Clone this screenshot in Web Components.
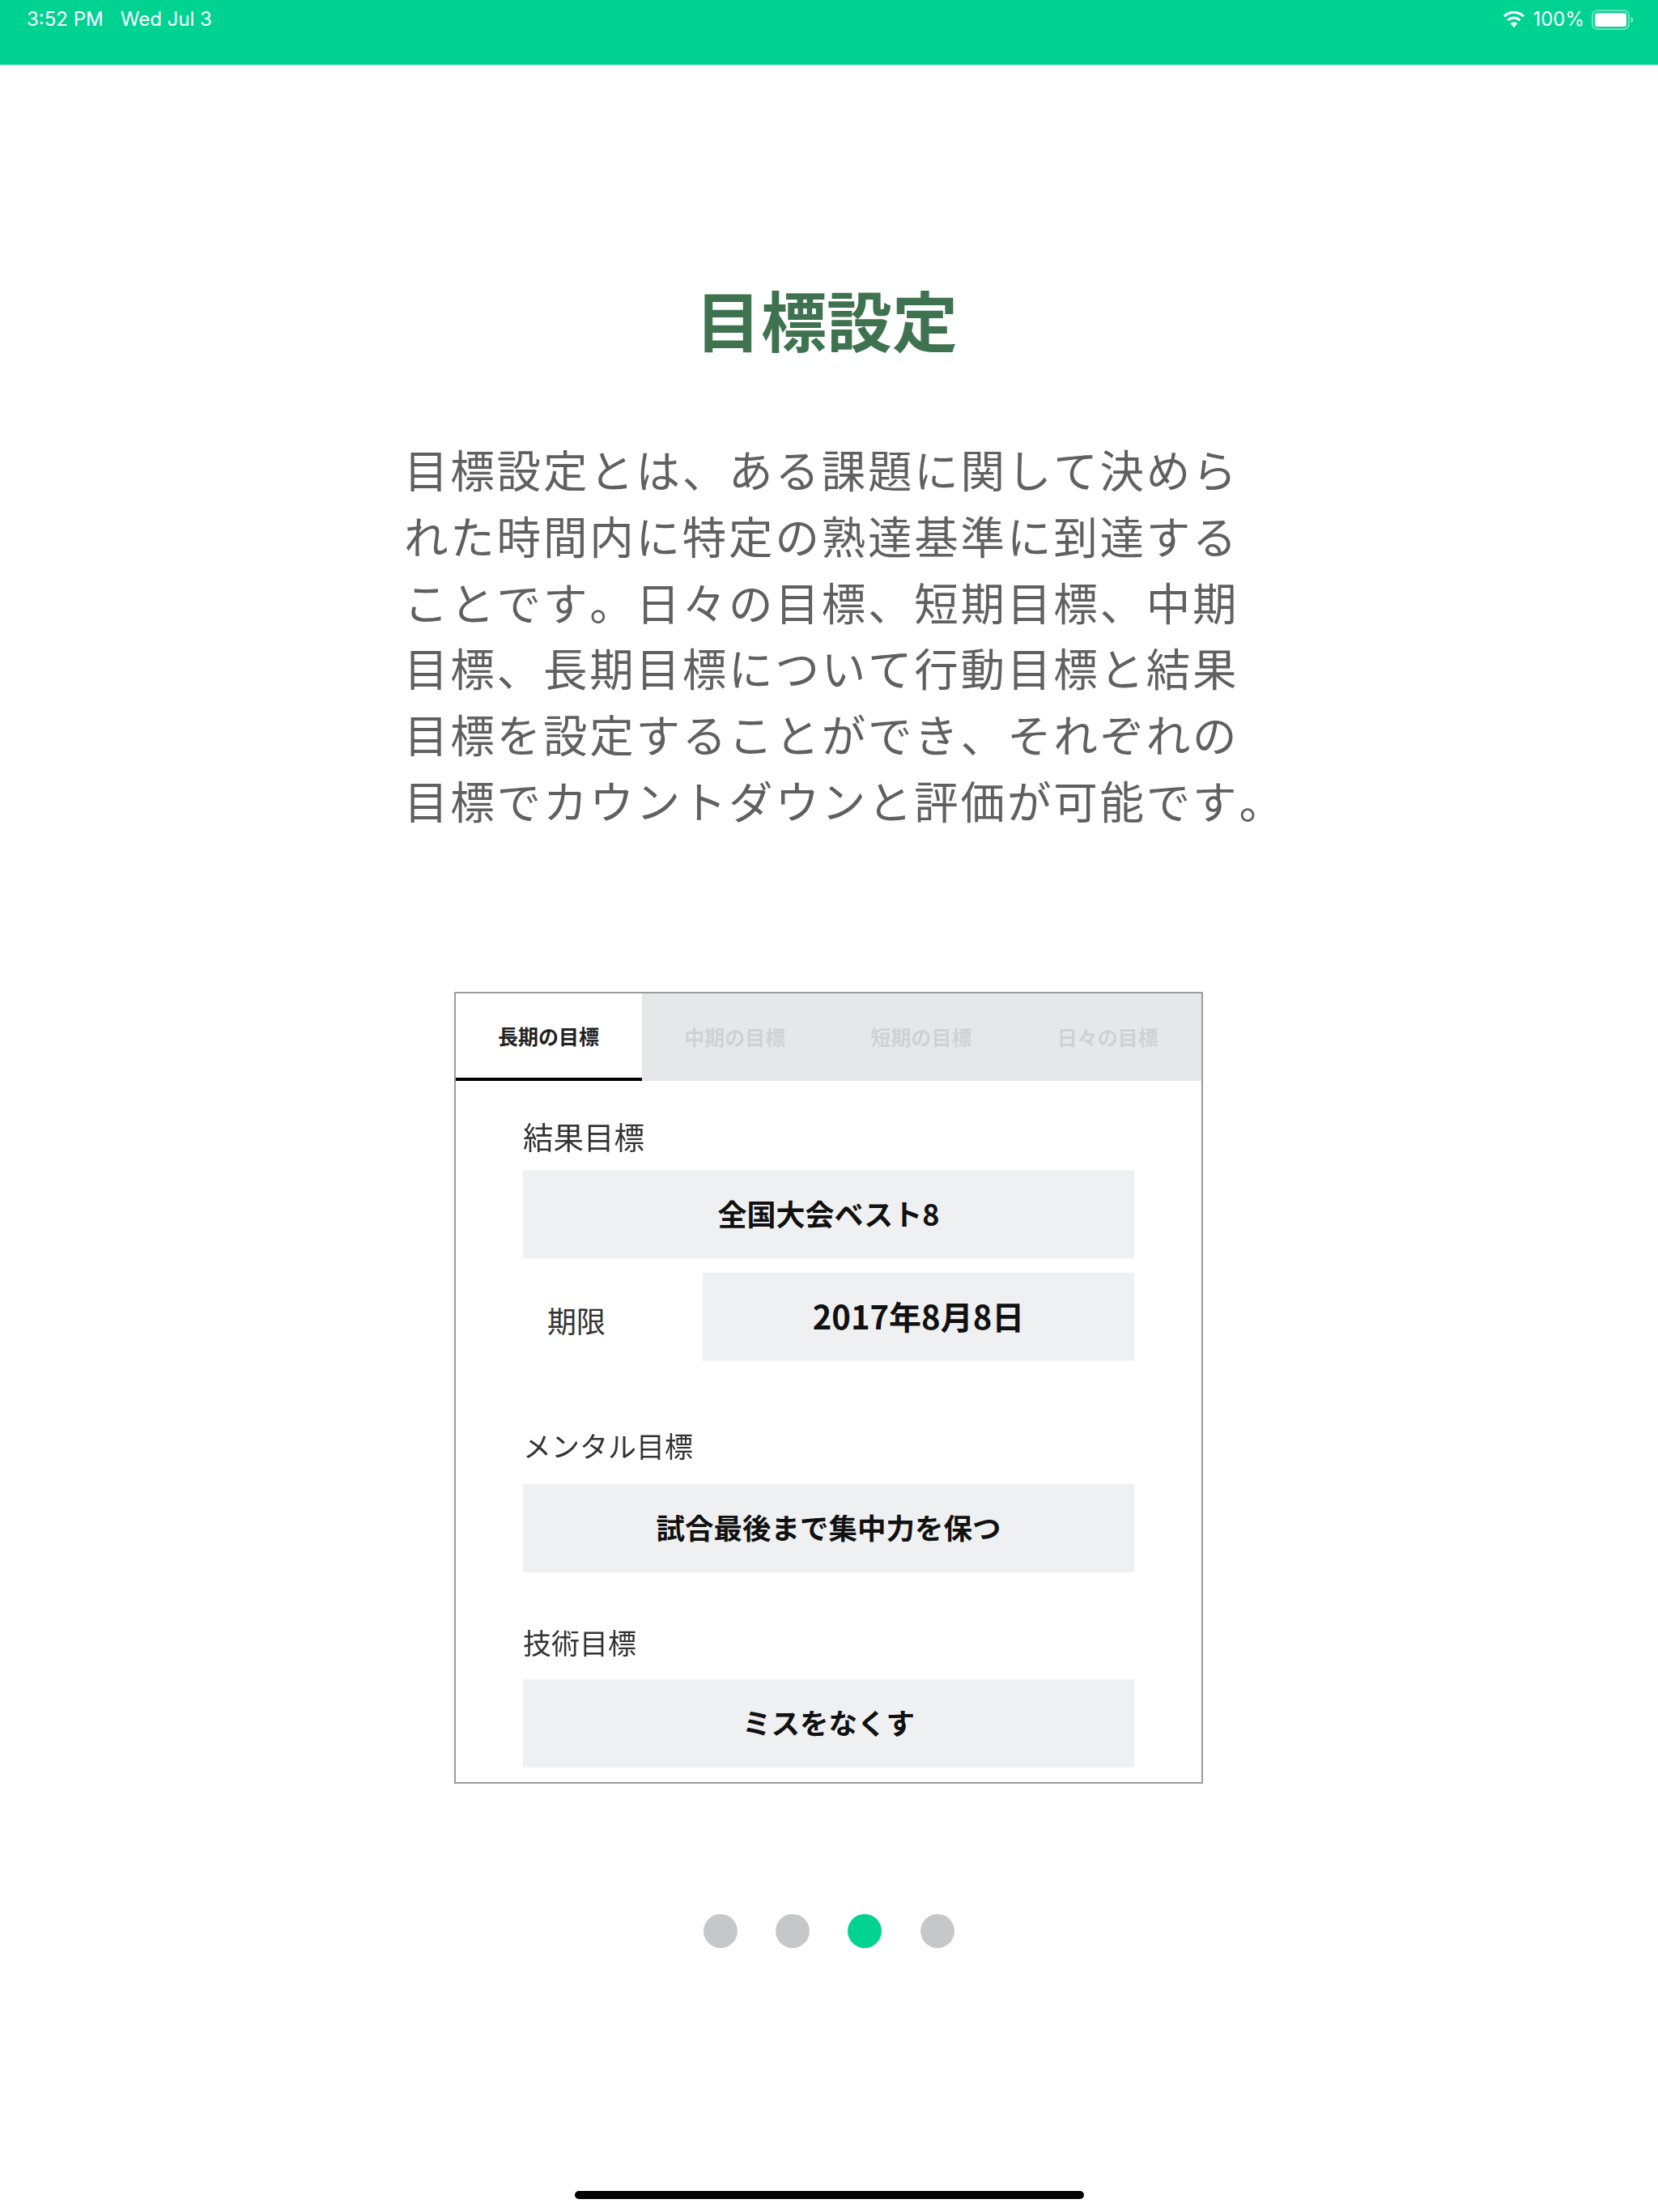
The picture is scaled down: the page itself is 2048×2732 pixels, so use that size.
<!DOCTYPE html>
<html lang="ja"><head><meta charset="utf-8"><title>目標設定</title>
<style>
html,body{margin:0;padding:0;background:#fff}
body{width:2048px;height:2732px;overflow:hidden;font-family:"Noto Sans CJK JP","Noto Sans",sans-serif}
</style></head><body>
<onboard-page>
  <status-bar slot="status"></status-bar>
  <page-title slot="title">目標設定</page-title>
  <intro-text slot="intro">目標設定とは、ある課題に関して決めら<br>れた時間内に特定の熟達基準に到達する<br>ことです。日々の目標、短期目標、中期<br>目標、長期目標について行動目標と結果<br>目標を設定することができ、それぞれの<br>目標でカウントダウンと評価が可能です。</intro-text>
  <goal-card slot="card">
    <goal-tabs slot="tabs"></goal-tabs>
    <goal-label style="--top:48px;--size:37.500px">結果目標</goal-label>
    <goal-field style="--top:22px;--size:36px">全国大会ベスト8</goal-field>
    <goal-deadline></goal-deadline>
    <goal-label style="--top:84px;--size:35px">メンタル目標</goal-label>
    <goal-field style="--top:28px;--size:35.500px">試合最後まで集中力を保つ</goal-field>
    <goal-label style="--top:66px;--size:35px">技術目標</goal-label>
    <goal-field style="--top:26px;--size:35.500px">ミスをなくす</goal-field>
  </goal-card>
  <pager-dots slot="dots" active="2"></pager-dots>
  <home-bar slot="home"></home-bar>
</onboard-page>
<script>
const JP='"Noto Sans CJK JP","Noto Sans",sans-serif';
function el(name,css,html){
  customElements.define(name,class extends HTMLElement{
    constructor(){super();this.attachShadow({mode:'open'}).innerHTML='<style>'+css+'</style>'+html;}
  });
}
el('onboard-page',`:host{display:flex;flex-direction:column;width:2048px;height:2732px;align-items:center}
 ::slotted([slot=status]){align-self:stretch}`,
 `<slot name="status"></slot><slot name="title"></slot><slot name="intro"></slot><slot name="card"></slot><slot name="dots"></slot><slot name="home"></slot>`);
el('status-bar',`:host{display:flex;height:80px;box-sizing:border-box;background:#00d291;color:#fff;padding:10px 30px 0 33px;font:24px/28px Inter,"Liberation Sans",sans-serif;align-items:flex-start}
 .date{margin-left:21px}.sp{flex:1}.pct{margin:0 9px 0 9px}
 svg{display:block}`,
 `<span>3:52 PM</span><span class="date">Wed Jul 3</span><span class="sp"></span>
 <svg width="28" height="20" viewBox="0 0 28 20" style="margin-top:4px;overflow:visible"><path d="M14 20 9.600 15A6.600 6.600 0 0 1 18.400 15Z" fill="#fff"/><path d="M6.500 11A10.800 10.800 0 0 1 21.500 11" fill="none" stroke="#fff" stroke-width="3"/><path d="M2 6.200A17 17 0 0 1 26 6.200" fill="none" stroke="#fff" stroke-width="3"/></svg>
 <span class="pct">100%</span>
 <svg width="52" height="26" viewBox="0 0 52 26" style="margin-top:2px"><rect x="1" y="1" width="45" height="23" rx="6" fill="none" stroke="#fff" stroke-opacity=".4" stroke-width="2"/><rect x="4" y="4" width="39" height="17" rx="3.5" fill="#fff"/><path d="M48.500 9c1.800.5 2.800 2 2.800 3.500S50.300 15.500 48.500 16Z" fill="#fff" fill-opacity=".5"/></svg>`);
el('page-title',`:host{display:block;margin:268px 6px 0 0;height:90px;font:700 81px/90px ${JP};color:#3f7350;text-align:center;white-space:nowrap;filter:blur(.6px)}`,`<slot></slot>`);
el('intro-text',`:host{display:block;align-self:flex-start;margin:100px 0 0 499px;font:400 54.500px/81.800px ${JP};font-kerning:none;letter-spacing:2.800px;color:#606060;white-space:nowrap;filter:blur(.6px)}`,`<slot></slot>`);
el('goal-card',`:host{display:flex;flex-direction:column;box-sizing:border-box;width:925px;height:978px;margin-top:196px;border:2px solid #9c9c9c;background:#fff;overflow:hidden;align-self:flex-start;margin-left:561px}
 .body{display:flex;flex-direction:column;padding:0 83px}`,
 `<slot name="tabs"></slot><div class="body"><slot></slot></div>`);
el('goal-tabs',`:host{display:grid;grid-template-columns:repeat(4,1fr);height:108px;background:#e6e7e8;font:700 25px/1 ${JP};color:#d0d1d2}
 div{display:flex;align-items:center;justify-content:center;box-sizing:border-box;padding:2px 1px 2px 0;filter:blur(.4px)}
 .on{background:#fff;color:#222;border-bottom:4px solid #000;padding:2px 1px 0 0;filter:none}`,
 `<div class="on">長期の目標</div><div>中期の目標</div><div>短期の目標</div><div>日々の目標</div>`);
el('goal-label',`:host{display:block;margin-top:var(--top);font:400 var(--size)/40px ${JP};color:#333;filter:blur(.4px)}`,`<slot></slot>`);
el('goal-field',`:host{display:flex;align-items:center;justify-content:center;box-sizing:border-box;margin-top:var(--top);height:109px;padding-bottom:3px;background:#eff0f1;font:700 var(--size)/1 ${JP};color:#111}`,`<slot></slot>`);
el('goal-deadline',`:host{display:flex;margin-top:18px;height:109px;font:400 36px/40px ${JP};color:#333}
 span{width:222px;box-sizing:border-box;padding:38px 0 0 30px}
 div{flex:1;display:flex;align-items:center;justify-content:center;box-sizing:border-box;padding-bottom:3px;background:#eff0f1;font:700 40px/1 ${JP};color:#111}`,
 `<span>期限</span><div>2017年8月8日</div>`);
el('pager-dots',`:host{display:flex;gap:47.500px;margin-top:161px}
 i{display:block;width:42px;height:42px;border-radius:50%;background:#c6c7c9}
 i.on{background:#00d291;transform:translateX(-1px)}`,`<i></i><i></i><i class="on"></i><i></i>`);
el('home-bar',`:host{display:block;width:629px;height:10px;border-radius:5px;background:#000;margin-top:300px}`,``);
</script>
</body></html>
